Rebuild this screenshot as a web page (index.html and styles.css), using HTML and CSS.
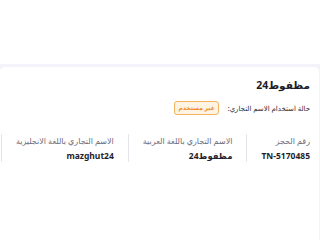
FILE: index.html
```html
<!DOCTYPE html>
<html lang="ar" dir="rtl">
<head>
<meta charset="utf-8">
<link rel="stylesheet" href="styles.css">
</head>
<body>
<div class="top"></div>
<div class="band">
  <div class="card">
    <h1 class="title">مظفوط24</h1>
    <div class="status">
      <span class="status-label">حالة استخدام الاسم التجاري:</span>
      <span class="badge">غير مستخدم</span>
    </div>
    <div class="cols">
      <div class="col">
        <div class="label">رقم الحجز</div>
        <div class="value">TN-5170485</div>
      </div>
      <div class="col">
        <div class="label">الاسم التجاري باللغة العربية</div>
        <div class="value">مظفوط24</div>
      </div>
      <div class="col">
        <div class="label">الاسم التجاري باللغة الانجليزية</div>
        <div class="value">mazghut24</div>
      </div>
      <div class="col"></div>
    </div>
  </div>
</div>
</body>
</html>
```
FILE: styles.css
```css
html, body {
  margin: 0;
  padding: 0;
  background: #ffffff;
  font-family: "Noto Sans", "DejaVu Sans", sans-serif;
  color: #1f1f2e;
  width: 320px;
  height: 240px;
  overflow: hidden;
}
.top {
  height: 64px;
}
.band {
  background: #f4f2fb;
  padding-top: 3px;
  padding-right: 1px;
  height: 173px;
}
.card {
  background: #ffffff;
  border-radius: 5px 5px 0 0;
  height: 100%;
  padding: 10px 9px 0 0;
  box-sizing: border-box;
}
.title {
  margin: 0;
  font-size: 10.5px;
  font-weight: 700;
  line-height: 16px;
  color: #1c1c28;
}
.status {
  margin-top: 8px;
  display: flex;
  align-items: center;
  gap: 9px;
}
.status-label {
  font-size: 7px;
  color: #2a2a38;
}
.badge {
  display: inline-block;
  height: 12px;
  line-height: 12px;
  padding: 0 3px;
  font-size: 6px;
  font-weight: 700;
  color: #ee8a1c;
  background: #fff4e4;
  border: 1px solid #f2b25e;
  border-radius: 3px;
}
.cols {
  margin-top: 19px;
  display: flex;
  white-space: nowrap;
}
.col {
  padding: 1px 14px;
  border-left: 1px solid #e4e4ea;
  display: flex;
  flex-direction: column;
  gap: 4px;
}
.col:first-child {
  padding-right: 0;
}
.col:last-child {
  border-left: none;
  padding: 0;
}
.label {
  font-size: 8px;
  line-height: 11px;
  color: #6c6c7a;
}
.value {
  font-size: 8.5px;
  line-height: 11px;
  font-weight: 700;
  color: #1f1f2e;
}
```
